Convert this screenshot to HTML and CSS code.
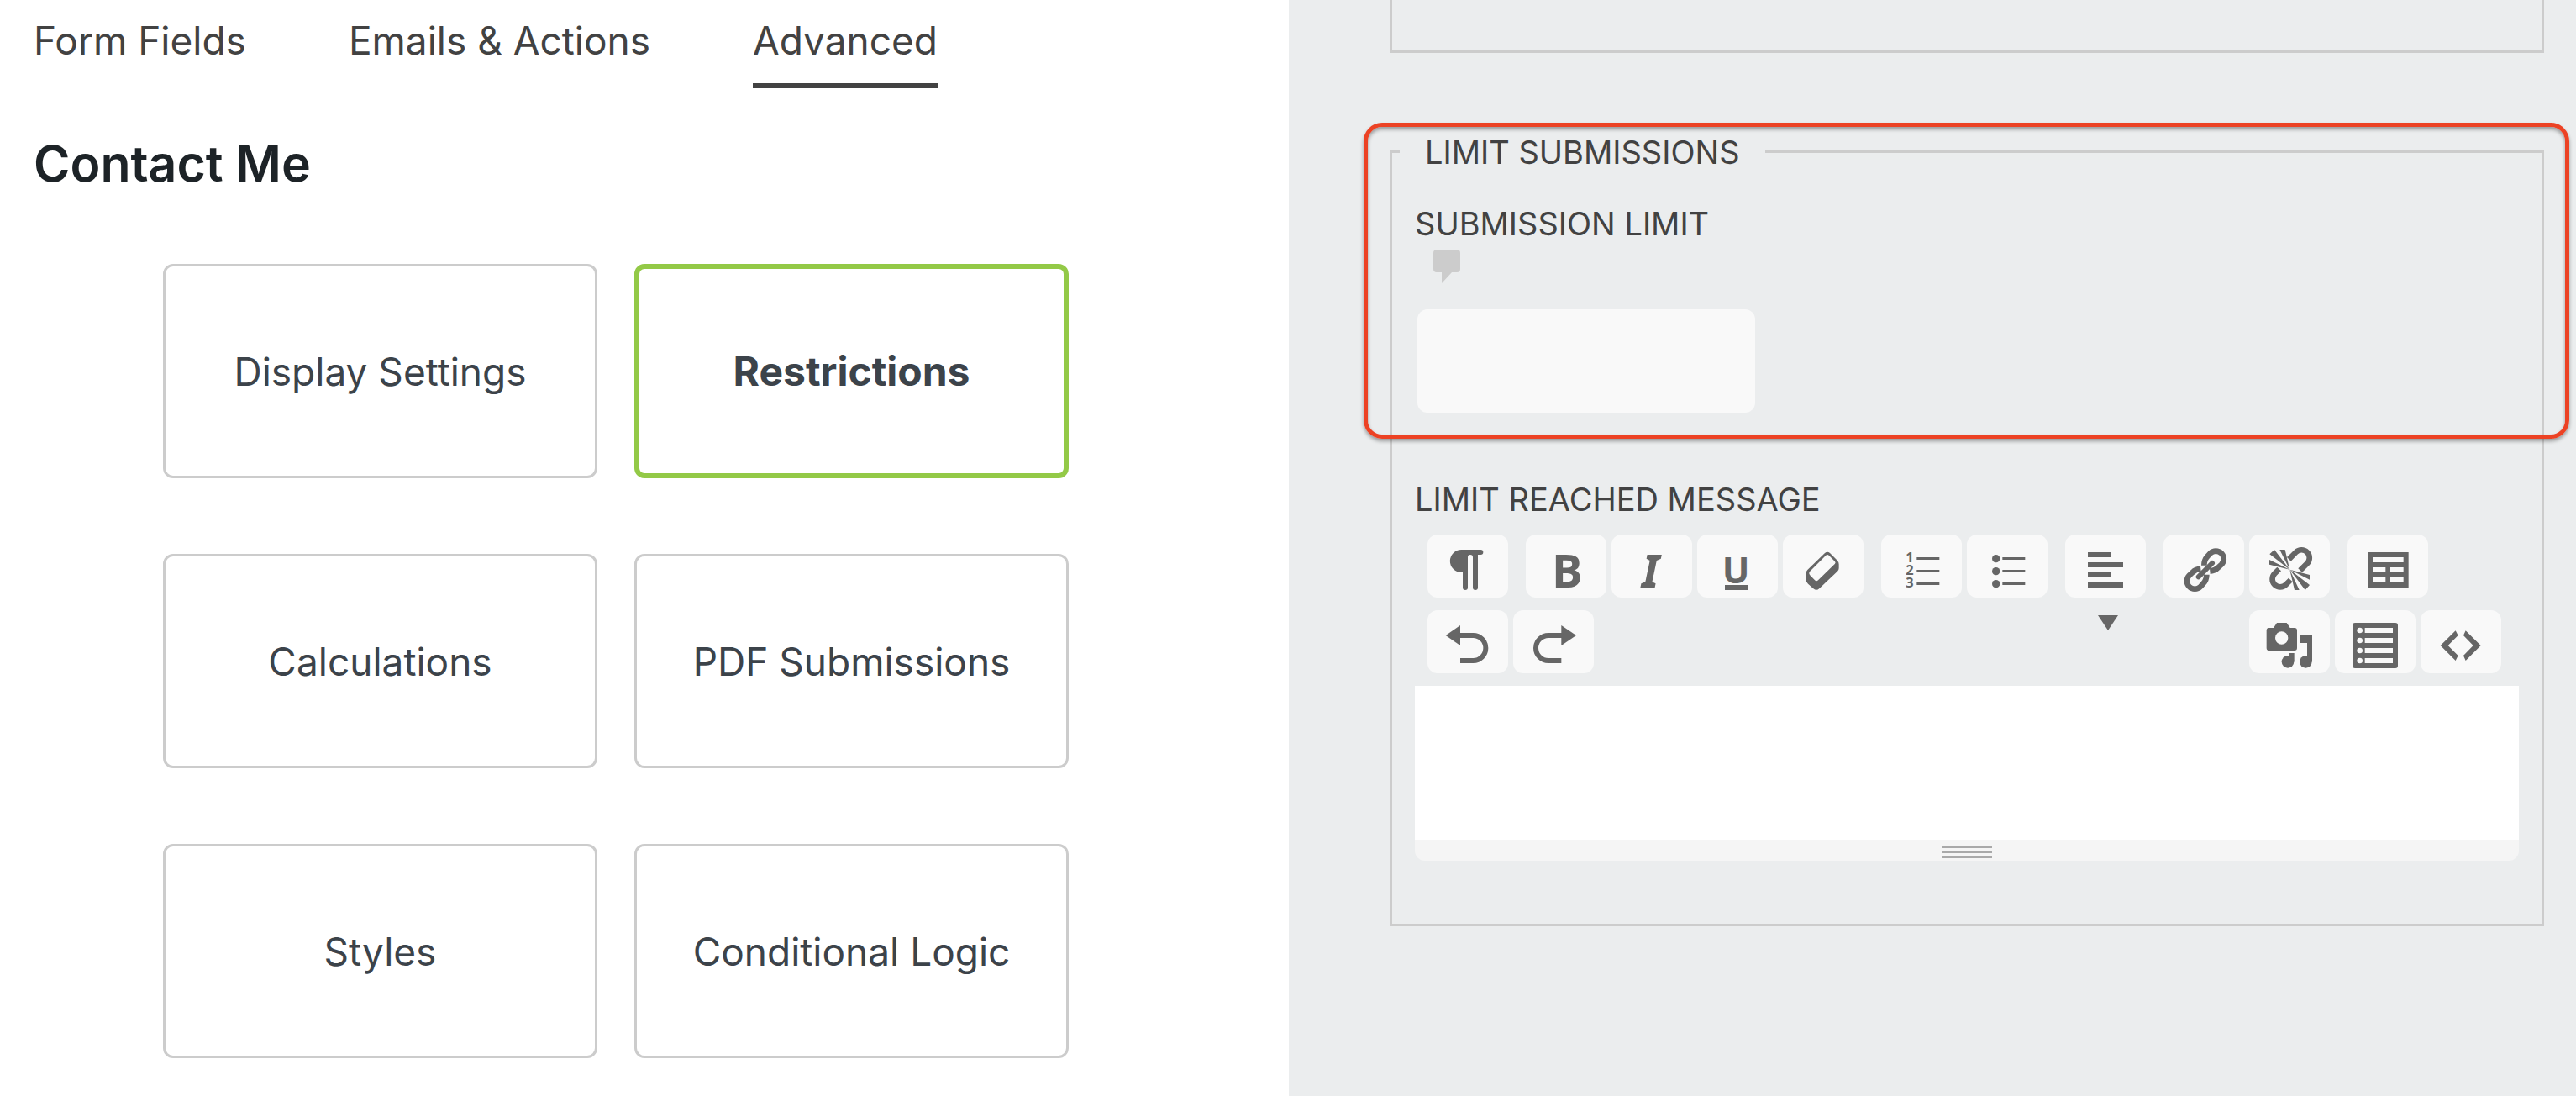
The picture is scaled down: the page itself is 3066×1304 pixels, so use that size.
FILE: index.html
```html
<!DOCTYPE html>
<html lang="en">
<head>
<meta charset="utf-8">
<title>Contact Me - Advanced</title>
<link rel="stylesheet" href="styles.css">
</head>
<body>
<div class="builder">
  <main class="main">
    <nav class="tabs">
      <a class="tab" href="#fields">Form Fields</a>
      <a class="tab" href="#actions">Emails &amp; Actions</a>
      <a class="tab tab-active" href="#advanced">Advanced</a>
    </nav>
    <h1 class="title">Contact Me</h1>
    <div class="tiles">
      <button class="tile" type="button">Display Settings</button>
      <button class="tile tile-active" type="button">Restrictions</button>
      <button class="tile" type="button">Calculations</button>
      <button class="tile" type="button">PDF Submissions</button>
      <button class="tile" type="button">Styles</button>
      <button class="tile" type="button">Conditional Logic</button>
    </div>
  </main>

  <aside class="drawer">
    <div class="previous-group"></div>
    <div class="group-wrap">
      <fieldset class="group">
        <legend class="legend">LIMIT SUBMISSIONS</legend>
        <label class="label" for="limit">SUBMISSION LIMIT</label>
        <svg class="help" viewBox="0 0 32 40" aria-hidden="true"><path d="M4 0H28Q32 0 32 4V23Q32 27 28 27H22L10 40V27H4Q0 27 0 23V4Q0 0 4 0Z"/></svg>
        <input class="limit" id="limit" type="text">
        <label class="label label-message" for="message">LIMIT REACHED MESSAGE</label>
        <div class="toolbar">
          <div class="bar">
            <div class="set">
              <button class="tool" type="button" aria-label="Paragraph"><svg viewBox="0 0 288 225"><path d="M121 54H190a9 9 0 0 1 0 18H180V189a9 9 0 0 1-18 0V81a9 9 0 0 0-18 0V189a9 9 0 0 1-18 0V135H121a40 40 0 0 1 0-81z"/></svg></button>
            </div>
            <div class="set">
              <button class="tool" type="button" aria-label="Bold"><svg viewBox="0 0 288 225"><text class="glyph-bold" x="93" y="188">B</text></svg></button>
              <button class="tool" type="button" aria-label="Italic"><svg viewBox="0 0 288 225"><text class="glyph-italic" x="108" y="188">I</text></svg></button>
              <button class="tool" type="button" aria-label="Underline"><svg viewBox="0 0 288 225"><text class="glyph-under" x="89" y="173">U</text><path d="M99 180H180V198H99z"/></svg></button>
              <button class="tool" type="button" aria-label="Clear formatting"><svg viewBox="0 0 288 225"><path fill-rule="evenodd" d="M150 66Q159 58 168 66L192 90Q200 98 200 106V120Q200 126 195 131L130 193Q120 202 109 193L90 176Q82 168 82 160V140Q82 132 88 126ZM153 75Q159 69 165 75L185 95Q190 99 186 104L126 163Q120 169 114 163L96 144Q91 138 96 132Z"/></svg></button>
            </div>
            <div class="set">
              <button class="tool" type="button" aria-label="Ordered list"><svg viewBox="0 0 288 225"><text class="glyph-digit" x="88" y="99">1</text><text class="glyph-digit" x="88" y="144">2</text><text class="glyph-digit" x="88" y="189">3</text><path d="M127 81H208V90H127zM127 126H208V135H127zM127 171H208V180H127z"/></svg></button>
              <button class="tool" type="button" aria-label="Unordered list"><svg viewBox="0 0 288 225"><circle cx="104" cy="86" r="14"/><circle cx="104" cy="131" r="14"/><circle cx="104" cy="176" r="14"/><path d="M127 81H208V90H127zM127 126H208V135H127zM127 171H208V180H127z"/></svg></button>
            </div>
            <div class="set">
              <button class="tool tool-menu" type="button" aria-label="Align"><svg viewBox="0 0 288 225"><path d="M81 63H162V81H81zM81 99H207V117H81zM81 135H162V153H81zM81 171H207V189H81z"/></svg><svg class="caret" viewBox="0 0 24 18"><path d="M0 0H24L12 18z"/></svg></button>
            </div>
            <div class="set">
              <button class="tool" type="button" aria-label="Link"><svg viewBox="0 0 288 225"><g class="line"><path class="line-ring" d="M145 110Q145 91 157 78L167 67A28 28 0 0 1 207 107L195 118Q185 129 166 131M154 143Q154 162 142 175L132 186A28 28 0 0 1 92 146L104 135Q114 124 133 122"/><path class="line-round" d="M125 151L174 102"/></g></svg></button>
              <button class="tool" type="button" aria-label="Unlink"><svg viewBox="0 0 288 225"><g class="line"><path class="line-ring" d="M142 88L167 63A28 28 0 0 1 207 103L182 128M148 162L131 179A28 28 0 0 1 91 139L107 123"/></g><path d="M109 54H128L145 125zM73 70L90 54L145 125zM72 90V107L145 125zM216 144V161L145 125zM216 180L200 198L145 125zM179 198H162L145 125z"/></svg></button>
            </div>
            <div class="set">
              <button class="tool" type="button" aria-label="Table"><svg viewBox="0 0 288 225"><path fill-rule="evenodd" d="M72 63H218V189H72zM90 81V99H200V81zM90 117V135H136V117zM153 117V135H200V117zM90 153V171H136V153zM153 153V171H200V153z"/></svg></button>
            </div>
          </div>
          <div class="bar bar-split">
            <div class="set">
              <button class="tool" type="button" aria-label="Undo"><svg viewBox="0 0 288 225"><path d="M65 90L117 54V126z"/><path class="line" d="M110 90H163a45 45 0 0 1 0 90H117"/></svg></button>
              <button class="tool" type="button" aria-label="Redo"><svg viewBox="0 0 288 225"><path d="M225 90L172 54V126z"/><path class="line" d="M179 90H126a45 45 0 0 0 0 90H172"/></svg></button>
            </div>
            <div class="set">
              <button class="tool" type="button" aria-label="Insert media"><svg viewBox="0 0 288 225"><path fill-rule="evenodd" d="M71 63H87L99 45H134L146 63H162Q171 63 171 72V135Q171 144 162 144H71Q62 144 62 135V72Q62 63 71 63zM139 99a23 23 0 1 0-46 0a23 23 0 1 0 46 0z"/><circle cx="138" cy="184" r="22"/><circle cx="202" cy="184" r="22"/><path d="M144 153H161V184H144zM180 90H225V184H207V117H180z"/></svg></button>
              <button class="tool" type="button" aria-label="Insert merge tag"><svg viewBox="0 0 288 225"><rect x="63" y="45" width="162" height="162" rx="9"/><g class="knockout"><circle cx="89" cy="72" r="10"/><circle cx="89" cy="108" r="10"/><circle cx="89" cy="144" r="10"/><circle cx="89" cy="180" r="10"/><path d="M107 63H207V81H107zM107 99H207V117H107zM107 135H207V153H107zM107 171H207V189H107z"/></g></svg></button>
              <button class="tool" type="button" aria-label="Code view"><svg viewBox="0 0 288 225"><path d="M125 73L71 126L125 180L134 162L98 126L134 90zM161 73L215 126L161 180L153 162L188 126L153 90z"/></svg></button>
            </div>
          </div>
        </div>
        <textarea class="message" id="message"></textarea>
        <div class="resizer"><span class="grip"></span></div>
      </fieldset>
      <div class="highlight"></div>
    </div>
  </aside>
</div>
</body>
</html>
```

FILE: styles.css
```css
* {
  box-sizing: border-box;
}

body {
  margin: 0;
  font-family: Inter, "Liberation Sans", sans-serif;
  background: #fff;
}

button {
  font: inherit;
  cursor: pointer;
}

.builder {
  display: grid;
  grid-template-columns: 1534fr 1532fr;
  min-height: 100vh;
}

/* Left side: tabs and the settings tiles */
.tabs {
  display: flex;
  gap: 122px;
  padding-left: 40px;
}

.tab {
  padding: 18px 0 21px;
  border-bottom: 6px solid transparent;
  color: #424242;
  font-size: 46px;
  line-height: 60px;
  text-decoration: none;
  white-space: nowrap;
}

.tab-active {
  border-color: #424242;
}

.title {
  margin: 53px 0 82px 40px;
  color: #1d2327;
  font-size: 59px;
  font-weight: 600;
  line-height: 74px;
}

.tiles {
  display: grid;
  grid-template-columns: 1fr 1fr;
  gap: 90px 44px;
  margin: 0 262px 45px 194px;
}

.tile {
  height: 255px;
  padding: 0;
  border: 3px solid #ccc;
  border-radius: 12px;
  background: #fff;
  color: #3c434a;
  font-size: 46px;
  line-height: 60px;
}

.tile-active {
  border: 6px solid #93c947;
  font-size: 48px;
  font-weight: 700;
}

/* Right side: settings drawer */
.drawer {
  padding: 0 38px 0 120px;
  background: #ebedee;
  color: #424242;
}

.previous-group {
  height: 63px;
  border: 3px solid #ccc;
  border-top: 0;
}

.group-wrap {
  position: relative;
  margin-top: 87px;
}

.group {
  min-width: 0;
  margin: 0;
  padding: 32px 27px 75px;
  border: 3px solid #ccc;
}

.legend {
  margin-left: -18px;
  padding: 2px 30px 0;
  font-size: 38px;
  line-height: 58px;
}

.label {
  display: block;
  font-size: 38px;
  line-height: 48px;
}

.help {
  display: block;
  width: 32px;
  height: 40px;
  margin: 7px 0 31px 22px;
  fill: #ccc;
}

.limit {
  display: block;
  width: 402px;
  height: 123px;
  margin: 0 0 79px 3px;
  padding: 0 30px;
  border: 0;
  border-radius: 12px;
  background: #f9f9f9;
  font: inherit;
  font-size: 38px;
}

.label-message {
  margin-bottom: 18px;
}

.toolbar {
  display: grid;
  gap: 15px;
  padding: 0 21px 15px 15px;
}

.bar {
  display: flex;
  gap: 21px;
}

.bar-split {
  justify-content: space-between;
}

.set {
  display: flex;
  gap: 6px;
}

.tool {
  display: block;
  width: 96px;
  height: 75px;
  padding: 0;
  border: 0;
  border-radius: 12px;
  background: #f9f9f9;
}

.tool svg {
  display: block;
  width: 100%;
  height: 100%;
  overflow: visible;
  fill: #666;
}

.tool-menu {
  position: relative;
}

.tool .caret {
  position: absolute;
  top: 96px;
  left: 39px;
  width: 24px;
  height: 18px;
}

.line {
  fill: none;
  stroke: #666;
  stroke-width: 18;
}

.tool .line {
  fill: none;
}

.line-ring {
  stroke-width: 20;
}

.line-round {
  stroke-linecap: round;
}

.knockout {
  fill: #f9f9f9;
}

.glyph-bold {
  font: 700 163px "Open Sans", sans-serif;
}

.glyph-italic {
  font: italic 700 163px "Noto Sans", sans-serif;
}

.glyph-under {
  font: 700 130px "Open Sans", sans-serif;
}

.glyph-digit {
  font: 700 49px "Open Sans", sans-serif;
}

.message {
  display: block;
  width: 100%;
  height: 184px;
  padding: 30px;
  border: 0;
  background: #fff;
  font: inherit;
  font-size: 38px;
  resize: none;
}

.resizer {
  display: flex;
  justify-content: center;
  padding: 6px 0 3px;
  border-radius: 0 0 12px 12px;
  background: #f5f5f5;
}

.grip {
  width: 60px;
  height: 15px;
  background: repeating-linear-gradient(#a9a9a9 0 3px, transparent 3px 6px);
}

/* Callout frame laid over the first setting */
.highlight {
  position: absolute;
  top: -4px;
  right: -30px;
  left: -31px;
  height: 376px;
  border: 5px solid #ec4224;
  border-radius: 22px;
  box-shadow: 0 3px 4px rgba(0, 0, 0, .35), inset 0 3px 4px rgba(0, 0, 0, .35);
  pointer-events: none;
}
```
